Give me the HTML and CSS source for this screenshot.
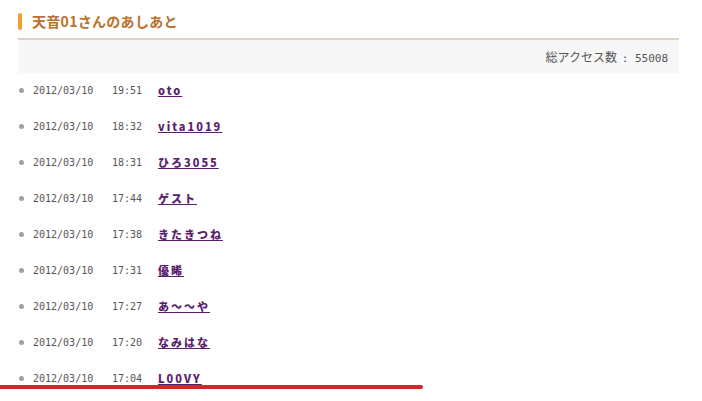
FILE: index.html
```html
<!DOCTYPE html>
<html lang="ja">
<head>
<meta charset="utf-8">
<link rel="stylesheet" href="styles.css">
</head>
<body>
<div class="page">
  <h2 class="title"><span class="bar"></span>天音01さんのあしあと</h2>
  <div class="total">総アクセス数 <span class="num">: 55008</span></div>
  <ul class="list">
    <li><span class="dot"></span><span class="date">2012/03/10</span><span class="time">19:51</span><a class="name" href="#">oto</a></li>
    <li><span class="dot"></span><span class="date">2012/03/10</span><span class="time">18:32</span><a class="name" href="#">vita1019</a></li>
    <li><span class="dot"></span><span class="date">2012/03/10</span><span class="time">18:31</span><a class="name" href="#">ひろ3055</a></li>
    <li><span class="dot"></span><span class="date">2012/03/10</span><span class="time">17:44</span><a class="name" href="#">ゲスト</a></li>
    <li><span class="dot"></span><span class="date">2012/03/10</span><span class="time">17:38</span><a class="name" href="#">きたきつね</a></li>
    <li><span class="dot"></span><span class="date">2012/03/10</span><span class="time">17:31</span><a class="name" href="#">優晞</a></li>
    <li><span class="dot"></span><span class="date">2012/03/10</span><span class="time">17:27</span><a class="name" href="#">あ～～や</a></li>
    <li><span class="dot"></span><span class="date">2012/03/10</span><span class="time">17:20</span><a class="name" href="#">なみはな</a></li>
    <li><span class="dot"></span><span class="date">2012/03/10</span><span class="time">17:04</span><a class="name" href="#">L00VY</a></li>
  </ul>
</div>
<div class="redline"></div>
</body>
</html>
```
FILE: styles.css
```css
html, body {
  margin: 0;
  padding: 0;
  background: #ffffff;
  overflow: hidden;
}
body {
  width: 702px;
  height: 401px;
  position: relative;
  font-family: "Noto Sans CJK JP", "DejaVu Sans", sans-serif;
}
.page {
  margin-left: 19px;
  width: 660px;
  padding-top: 12px;
}
.title {
  margin: 0;
  display: flex;
  align-items: center;
  gap: 10px;
  height: 18px;
  font-size: 14px;
  font-weight: bold;
  color: #b9722c;
  letter-spacing: 0.3px;
  line-height: 18px;
  margin-left: -1px;
  padding-bottom: 8px;
  border-bottom: 2px solid #ddd3c4;
}
.bar {
  display: inline-block;
  width: 4px;
  height: 17px;
  border-radius: 2px;
  background: #eea033;
}
.total {
  height: 33px;
  background: #f7f7f7;
  text-align: right;
  padding-right: 11px;
  font-size: 12px;
  line-height: 33px;
  color: #555555;
  letter-spacing: 0;
  font-family: "Noto Sans CJK JP", sans-serif;
}
.num {
  font-family: "DejaVu Sans Mono", monospace;
  font-size: 11px;
  letter-spacing: 0;
  margin-left: 2px;
}
.list {
  list-style: none;
  margin: -1px 0 0 0;
  padding: 0;
}
.list li {
  height: 36px;
  display: flex;
  align-items: center;
}
.dot {
  width: 5px;
  height: 5px;
  border-radius: 50%;
  background: #a0a0a0;
  margin-right: 9px;
}
.date {
  font-family: "DejaVu Sans Mono", monospace;
  font-size: 10px;
  color: #555555;
  width: 79px;
}
.time {
  font-family: "DejaVu Sans Mono", monospace;
  font-size: 10px;
  color: #555555;
  width: 46px;
}
.name {
  font-family: "Noto Sans CJK JP", "DejaVu Sans", sans-serif;
  font-size: 11px;
  font-weight: 900;
  color: #5b1f6e;
  letter-spacing: 2px;
  text-decoration: underline;
  text-underline-offset: 1px;
  line-height: 14px;
}
.redline {
  position: absolute;
  left: 0;
  top: 385px;
  width: 423px;
  height: 4px;
  border-radius: 0 2px 2px 0;
  background: #d9232b;
}
```
